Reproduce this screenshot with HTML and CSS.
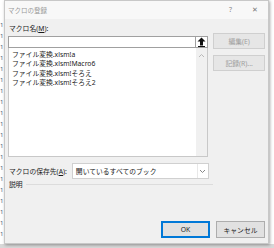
FILE: index.html
```html
<!DOCTYPE html>
<html>
<head>
<meta charset="utf-8">
<link rel="stylesheet" href="styles.css">
</head>
<body>
<div class="page">
  <div class="rownums">
    <span>1</span><span>1</span><span>1</span><span>1</span><span>1</span><span>1</span><span>1</span><span>1</span><span>1</span><span>1</span><span>1</span><span>1</span><span>1</span><span>1</span><span>1</span><span>1</span><span>1</span><span>1</span><span>1</span><span>1</span>
  </div>
  <div class="dialog">
    <div class="titlebar">
      <span class="title">マクロの登録</span>
      <span class="tb-btns"><span class="help">?</span><span class="close">✕</span></span>
    </div>
    <div class="body">
      <div class="main">
        <div class="leftcol">
          <div class="label">マクロ名(<u>M</u>):</div>
          <div class="inputrow">
            <div class="input"></div>
            <div class="upbtn">
              <svg width="9" height="10" viewBox="0 0 9 10"><path d="M4.5 0.5 L8.5 4.5 L6 4.5 L6 8.5 L3 8.5 L3 4.5 L0.5 4.5 Z" fill="#111"/><rect x="1" y="9" width="7" height="1" fill="#111"/></svg>
            </div>
          </div>
          <div class="list">
            <div class="items">
              <div>ファイル変換.xlsm!a</div>
              <div>ファイル変換.xlsm!Macro6</div>
              <div>ファイル変換.xlsm!そろえ</div>
              <div>ファイル変換.xlsm!そろえ2</div>
            </div>
            <div class="scroll">
              <svg width="7" height="5" viewBox="0 0 7 5"><path d="M1 4 L3.5 1.5 L6 4" fill="none" stroke="#b8b8b8" stroke-width="1"/></svg>
            </div>
          </div>
        </div>
        <div class="rightcol">
          <div class="btn disabled">編集(E)</div>
          <div class="btn disabled">記録(R)...</div>
        </div>
      </div>
      <div class="store">
        <span class="slabel">マクロの保存先(<u>A</u>):</span>
        <div class="combo">
          <span class="ctext">開いているすべてのブック</span>
          <span class="carrow"><svg width="7" height="5" viewBox="0 0 7 5"><path d="M1 1 L3.5 3.5 L6 1" fill="none" stroke="#888" stroke-width="1"/></svg></span>
        </div>
      </div>
      <div class="desc"><span>説明</span><span class="line"></span></div>
      <div class="footer">
        <div class="btn ok">OK</div>
        <div class="btn">キャンセル</div>
      </div>
    </div>
  </div>
</div>
</body>
</html>
```

FILE: styles.css
```css
* { box-sizing: border-box; }
html, body { margin: 0; padding: 0; }
body {
  width: 274px;
  height: 248px;
  background: #ffffff;
  font-family: "Noto Sans", "Noto Sans CJK JP", sans-serif;
  overflow: hidden;
}
.page {
  display: flex;
  height: 248px;
  background: linear-gradient(#ffffff 0 244px, #d8d8d8 244px);
}
.rownums {
  width: 4px;
  display: flex;
  flex-direction: column;
  font-size: 6px;
  line-height: 11px;
  color: #4a5a70;
  overflow: hidden;
  padding-top: 20px;
}
.dialog {
  width: 265px;
  height: 244px;
  background: #f0f0f0;
  border: 1px solid #c8c8c8;
  box-shadow: 1px 1px 3px rgba(0,0,0,0.35);
  display: flex;
  flex-direction: column;
  font-size: 6.8px;
  color: #1a1a1a;
}
.titlebar {
  height: 18px;
  background: #f8f8f8;
  display: flex;
  align-items: center;
  justify-content: space-between;
  padding: 0 10px 1px 3px;
}
.title { color: #9a9a9a; font-size: 6.5px; }
.tb-btns { display: flex; gap: 20px; color: #888; font-size: 7px; }
.close { font-size: 7px; color: #777; }
.body {
  flex: 1;
  display: flex;
  flex-direction: column;
  padding: 4px 3px 3px 3px;
}
.main { display: flex; gap: 5px; }
.leftcol { width: 201px; display: flex; flex-direction: column; }
.label { height: 13px; line-height: 12px; padding-left: 1px; }
.inputrow { display: flex; height: 12px; }
.input { flex: 1; background: #fff; border: 1px solid #a0a0a0; border-right: none; }
.upbtn {
  width: 13px;
  background: #fff;
  border: 1px solid #a0a0a0;
  display: flex;
  align-items: center;
  justify-content: center;
}
.list {
  height: 109px;
  background: #fff;
  border: 1px solid #c8c8c8;
  border-top: none;
  display: flex;
}
.items { flex: 1; padding: 1.5px 0 0 3px; line-height: 9.5px; }
.scroll {
  width: 11px;
  background: #f0f0f0;
  display: flex;
  justify-content: center;
  padding-top: 5px;
}
.scroll svg { display: block; }
.rightcol { width: 52px; display: flex; flex-direction: column; gap: 6px; padding-top: 10px; }
.btn {
  height: 16px;
  border: 1px solid #adadad;
  background: #e1e1e1;
  display: flex;
  align-items: center;
  justify-content: center;
}
.btn.disabled { color: #a0a0a0; border-color: #cfcfcf; background: #e6e6e6; }
.store {
  display: flex;
  align-items: center;
  margin-top: 6px;
  gap: 5px;
  padding-left: 1px;
}
.combo {
  width: 137px;
  height: 16px;
  background: #fff;
  border: 1px solid #d0d0d0;
  display: flex;
  align-items: center;
  justify-content: space-between;
  padding-left: 3px;
}
.carrow {
  width: 11px;
  height: 14px;
  display: flex;
  align-items: center;
  justify-content: center;
  border-left: 1px solid #e8e8e8;
}
.desc { display: flex; align-items: center; gap: 3px; height: 8px; margin-top: 1px; width: 205px; padding-left: 1px; }
.line { flex: 1; height: 1px; background: #dcdcdc; }
.footer {
  margin-top: auto;
  display: flex;
  justify-content: flex-end;
  gap: 6px;
  padding-bottom: 2px;
}
.footer .btn { width: 49px; height: 17px; }
.btn.ok { border: 1px solid #0078d7; box-shadow: inset 0 0 0 1px #0078d7; }
```
